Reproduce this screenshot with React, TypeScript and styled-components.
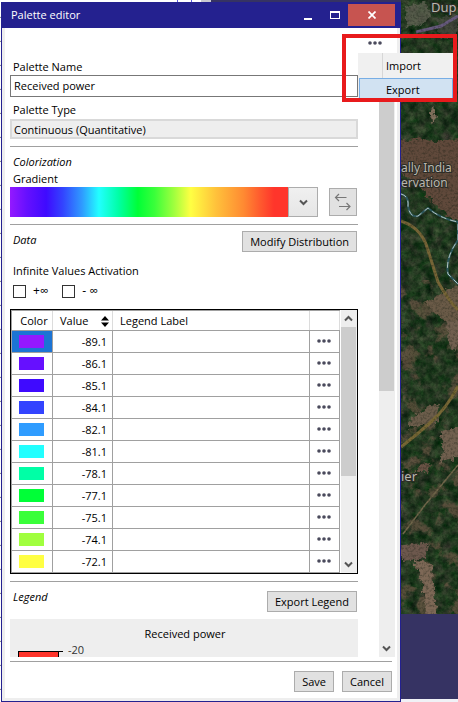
import React from "react";
import styled, { createGlobalStyle } from "styled-components";

const GlobalStyle = createGlobalStyle`
  *, *::before, *::after { box-sizing: border-box; }
  body { margin: 0; background: #f0f1f6; }
  body, button, input, table {
    font-family: "Open Sans", "Noto Sans", sans-serif;
    font-size: 11px;
    line-height: 16px;
    color: #000;
  }
  button, input { margin: 0; padding: 0; border-radius: 0; }
`;

const Desktop = styled.div`
  display: grid;
  grid-template-columns: 1px minmax(0, 1fr) 57px;
  min-height: 100vh;
  overflow: hidden;
`;

const LeftEdge = styled.div`
  background: repeating-linear-gradient(#fff 0 16px, #f2f2f2 16px 17px, #8c8c94 17px 18px, #fff 18px 24px);
`;

const DialogColumn = styled.div`
  padding-top: 2px;
  background: linear-gradient(
    90deg,
    #fff 0 176px, #5a5ae0 176px 177px, #fff 177px 190px, #5a5ae0 190px 191px,
    #fff 191px 200px, #c8c8d0 200px 210px, #363363 210px
  );
`;

const Window = styled.section`
  display: flex;
  flex-direction: column;
  min-height: 100%;
  border: 1px solid #24218f;
  border-top: 0;
  background: #eeeeee;
`;

const TitleBar = styled.header`
  display: flex;
  justify-content: space-between;
  height: 26px;
  padding: 2px 5px 2px 9px;
  background: #24218f;
`;

const Title = styled.h1`
  margin: 0;
  color: #fff;
  font-size: 11px;
  font-weight: 400;
  line-height: 22px;
`;

const WindowButtons = styled.div`
  display: flex;
`;

const WindowButton = styled.button<{ $close?: boolean }>`
  display: grid;
  place-items: center;
  width: ${(p) => (p.$close ? 47 : 27)}px;
  height: 22px;
  border: 0;
  background: ${(p) => (p.$close ? "#c75450" : "transparent")};
`;

const Surface = styled.main`
  display: flex;
  flex: 1;
  flex-direction: column;
  margin: 0 3px 3px;
  padding: 0 2px 0 5px;
  background: #fff;
`;

const ScrollRow = styled.div`
  display: flex;
  height: 629px;
`;

const Content = styled.div`
  display: flex;
  flex: 1;
  flex-direction: column;
  min-width: 0;
  padding-top: 31px;
`;

const Rail = styled.div`
  position: relative;
  display: flex;
  flex-direction: column;
  align-items: flex-end;
  width: 37px;
`;

const MoreButton = styled.button`
  display: grid;
  place-items: center;
  width: 27px;
  height: 30px;
  margin-right: 7px;
  border: 0;
  background: transparent;
`;

const FieldLabel = styled.label`
  padding-left: 3px;
`;

const NameInput = styled.input`
  height: 22px;
  margin: 0 0 5px;
  padding: 0 3px 2px;
  border: 1px solid #777;
  background: #fff;
`;

const TypeInput = styled.input`
  height: 20px;
  margin-top: 1px;
  padding: 0 2px;
  border: 2px solid #d9d9d9;
  background: #eee;
`;

const Divider = styled.hr`
  flex: none;
  width: 100%;
  height: 1px;
  margin: 7px 0 0;
  border: 0;
  background: #a0a0a0;
`;

const SectionTitle = styled.h2`
  margin: 0;
  padding: 0 3px;
  font-size: 11px;
  font-style: italic;
  font-weight: 400;
  line-height: 18px;
`;

const Stack = styled.div`
  display: flex;
  flex-direction: column;
  padding-top: 6px;
`;

const GradientRow = styled.div`
  display: flex;
  align-items: center;
  height: 30px;
`;

const GradientBar = styled.div`
  flex: 1;
  height: 30px;
  background: linear-gradient(
    90deg,
    #9419ff 0%, #6610ff 6%, #3f0aff 13%, #3344ff 19%, #2f9cff 26%, #22ffff 32%,
    #00ffa6 39%, #00ff37 46%, #3aff3a 52%, #a0ff3e 59%, #ffff43 65%,
    #ffc23b 74%, #ff8a32 84%, #ff5a2e 90%, #ff352b 95%, #ff352b 100%
  );
`;

const DropButton = styled.button`
  display: grid;
  place-items: center;
  width: 30px;
  height: 30px;
  border: 1px solid #acacac;
  background: linear-gradient(#f0f0f0, #e6e6e6);
`;

const SwapButton = styled.button`
  display: grid;
  place-items: center;
  width: 28px;
  height: 28px;
  margin: 0 1px 0 11px;
  border: 1px solid #acacac;
  background: #e1e1e1;
`;

const SectionBar = styled.div<{ $tall?: boolean }>`
  display: flex;
  align-items: flex-end;
  justify-content: space-between;
  padding: 6px 1px 0 0;

  & > h2 {
    padding-bottom: ${(p) => (p.$tall ? 6 : 3)}px;
  }
`;

const Button = styled.button`
  height: 21px;
  padding: 0 7px;
  border: 1px solid #acacac;
  background: #e1e1e1;
  line-height: 18px;
  white-space: nowrap;
`;

const GroupLabel = styled.div`
  margin-top: 11px;
  padding-left: 3px;
`;

const Checks = styled.div`
  display: flex;
  gap: 14px;
  margin-top: 4px;
  padding-left: 3px;
`;

const CheckLabel = styled.label`
  display: flex;
  align-items: center;
  gap: 7px;
  height: 16px;
  font-size: 12px;
`;

const Checkbox = styled.input`
  appearance: none;
  width: 13px;
  height: 13px;
  border: 1px solid #333;
  background: #fff;
`;

const TableFrame = styled.div`
  display: flex;
  height: 265px;
  margin-top: 10px;
  border: 1px solid #000;
`;

const Table = styled.table`
  flex: 1;
  width: 100%;
  min-width: 0;
  table-layout: fixed;
  border-spacing: 0;
  border: solid #a0a0a0;
  border-width: 1px 0 0 1px;
`;

const HeadCell = styled.th<{ $width?: number }>`
  width: ${(p) => (p.$width ? p.$width + "px" : "auto")};
  height: 20px;
  padding: 1px 4px 0 7px;
  border: solid #a0a0a0;
  border-width: 0 0 1px;
  box-shadow: inset -1px 0 #dcdcdc;
  font-weight: 400;
  text-align: left;

  &:first-child {
    padding: 1px 0 0 3px;
    text-align: center;
  }
`;

const SortHead = styled.div`
  display: flex;
  align-items: center;
  justify-content: space-between;
`;

const Cell = styled.td<{ $selected?: boolean }>`
  height: 22px;
  padding: 0 5px 0 7px;
  border: solid #a0a0a0;
  border-width: 0 1px 1px 0;
  background: ${(p) => (p.$selected ? "#1c74d4" : "#fff")};
  line-height: 21px;
  text-align: right;
`;

const ActionCell = styled(Cell)`
  padding: 0;
`;

const Swatch = styled.div`
  width: 25px;
  height: 13px;
`;

const RowButton = styled.button`
  display: grid;
  place-items: center;
  width: 28px;
  height: 18px;
  padding-bottom: 2px;
  border: 0;
  background: transparent;
`;

const Scrollbar = styled.div<{ $outer?: boolean }>`
  display: flex;
  flex: ${(p) => (p.$outer ? "1" : "none")};
  flex-direction: column;
  width: 16px;
  margin-left: 1px;
  background: #eee;
`;

const ScrollButton = styled.button`
  display: grid;
  flex: none;
  place-items: center;
  width: 15px;
  height: 17px;
  border: 0;
  background: transparent;
`;

const Thumb = styled.div<{ $length: number }>`
  flex: 0 0 ${(p) => p.$length}%;
  width: 15px;
  background: #cdcdcd;
`;

const Track = styled.div`
  display: flex;
  flex: 1;
  flex-direction: column;
`;

const LegendPanel = styled.div`
  flex: 1;
  min-height: 0;
  margin-top: 7px;
  padding-top: 7px;
  overflow: hidden;
  background: #eee;
`;

const LegendTitle = styled.div`
  padding-left: 2px;
  text-align: center;
`;

const LegendScale = styled.div`
  display: flex;
  align-items: flex-start;
  padding-left: 8px;
`;

const LegendBlock = styled.div`
  width: 41px;
  height: 20px;
  margin-top: 9px;
  border: 1px solid #000;
  background: #ff352b;
`;

const LegendTick = styled.div`
  width: 4px;
  height: 1px;
  margin: 9px 5px 0 0;
  background: #000;
`;

const LegendValue = styled.span`
  color: #333;
  line-height: 15px;
`;

const Footer = styled.footer`
  display: flex;
  justify-content: flex-end;
  gap: 8px;
  margin: 4px 3px 0 0;
  padding-top: 9px;
  border-top: 1px solid #a0a0a0;
`;

const Highlight = styled.div`
  position: absolute;
  top: 6px;
  right: -62px;
  z-index: 2;
  width: 115px;
  height: 68px;
  border: 4px solid #e81a1c;
  pointer-events: none;
`;

const Menu = styled.div`
  position: absolute;
  top: 25px;
  right: -58px;
  z-index: 1;
  display: flex;
  flex-direction: column;
  width: 95px;
  height: 47px;
  overflow: hidden;
  background: linear-gradient(90deg, #f0f0f0 24px, #d7d7d7 24px 25px, #f0f0f0 25px);
`;

const MenuItem = styled.button<{ $active?: boolean }>`
  flex: none;
  height: 25px;
  margin-left: 1px;
  padding: 0 0 ${(p) => (p.$active ? 2 : 0)}px 26px;
  border: 1px solid ${(p) => (p.$active ? "#78aee5" : "transparent")};
  background: ${(p) => (p.$active ? "#d1e2f2" : "transparent")};
  text-align: left;
`;

const MapColumn = styled.aside`
  display: flex;
  flex-direction: column;
  height: 699px;
  background: #363363;
`;

const MapDrawing = styled.svg`
  display: block;
  width: 57px;
  height: 614px;
`;

const MapText = styled.text<{ $town?: boolean }>`
  fill: #b9b7ae;
  stroke: #2c2c26;
  stroke-width: 2px;
  paint-order: stroke;
  font-family: "Noto Sans", sans-serif;
  font-size: ${(p) => (p.$town ? 13 : 12)}px;
`;

const Dots = () => (
  <svg width="16" height="6" viewBox="0 0 16 6" fill="#4a4a5c">
    <circle cx="3" cy="3" r="1.8" />
    <circle cx="8" cy="3" r="1.8" />
    <circle cx="13" cy="3" r="1.8" />
  </svg>
);

const Chevron = ({ up = false }: { up?: boolean }) => (
  <svg width="9" height="7" viewBox="0 0 9 7" fill="none" stroke="#555" strokeWidth="2">
    <path d={up ? "M1 5.5 4.5 2 8 5.5" : "M1 1.5 4.5 5 8 1.5"} />
  </svg>
);

const SwapIcon = () => (
  <svg width="18" height="18" viewBox="0 0 18 18" fill="none" stroke="#777" strokeWidth="1.2">
    <path d="M12.500 4.500H1.500M5 1 1.500 4.500 5 8M5 13.500h11M12.500 10l3.500 3.500-3.500 3.500" />
  </svg>
);

const SortIcon = () => (
  <svg width="8" height="11" viewBox="0 0 8 11">
    <path d="M0 4.500 4 0 8 4.500ZM0 6.500 4 11 8 6.500Z" />
  </svg>
);

const SatelliteMap = () => (
  <MapDrawing viewBox="0 0 57 614" role="img" aria-label="Satellite map">
    <defs>
      <filter id="forest" x="0" y="0" width="100%" height="100%" colorInterpolationFilters="sRGB">
        <feTurbulence type="fractalNoise" baseFrequency="0.12" numOctaves="5" seed="8" />
        <feColorMatrix values="0.35 0.05 0 0 -0.06  0.22 0.2 0 0 0.02  0.25 0.05 0 0 -0.02  0 0 0 0 1" />
      </filter>
      <filter id="fields" x="0" y="0" width="100%" height="100%" colorInterpolationFilters="sRGB">
        <feTurbulence type="fractalNoise" baseFrequency="0.06" numOctaves="5" seed="21" />
        <feColorMatrix values="0 0 0 0 0.4  0 0 0 0 0.33  0 0 0 0 0.26  8 0 0 0 -4.4" />
      </filter>
      <filter id="grain" x="0" y="0" width="100%" height="100%" colorInterpolationFilters="sRGB">
        <feTurbulence type="fractalNoise" baseFrequency="0.4" numOctaves="3" seed="2" />
        <feColorMatrix values="0 0 0 0 0.05  0 0 0 0 0.09  0 0 0 0 0.05  3 0 0 0 -1.3" />
      </filter>
      <filter id="rough" x="-10%" y="-10%" width="120%" height="120%">
        <feTurbulence type="fractalNoise" baseFrequency="0.2" numOctaves="3" seed="4" />
        <feDisplacementMap in="SourceGraphic" scale="9" xChannelSelector="R" yChannelSelector="G" />
      </filter>
    </defs>
    <rect width="57" height="614" fill="#1d3520" />
    <rect width="57" height="614" filter="url(#forest)" />
    <rect y="280" width="57" height="334" filter="url(#fields)" opacity="0.75" />
    <g filter="url(#rough)">
      <path d="M4 6 24 2 30 14 22 24 6 28Z" fill="#68675a" opacity="0.7" />
      <path d="M34 18 57 14V34L40 40Z" fill="#514d49" opacity="0.6" />
      <path d="M-6 142 20 138 34 142 66 138V224L44 214 28 198 18 184 6 178 -6 160Z" fill="#604a3a" />
      <path d="M44 290 66 284V330L46 322 32 312 24 304Z" fill="#6a5a46" />
      <path d="M32 108 35 118 31 122 28 112Z" fill="#806f5c" />
      <path d="M46 320 66 322 54 352 48 344Z" fill="#6f5f50" />
      <path d="M26 408 38 402 35 424 8 428 10 418Z" fill="#6c5d4b" />
      <path d="M40 432 66 424V452L38 464 42 450Z" fill="#71604f" />
      <path d="M20 464 30 462 26 472 14 472Z" fill="#6a5345" />
      <path d="M-6 546 28 542 24 558 4 562Z" fill="#6d594d" />
      <path d="M12 560 30 564 36 620H26L22 586Z" fill="#7d6757" />
    </g>
    <path d="M15 32 40 26 57 16" fill="none" stroke="#66597c" strokeWidth="3" />
    <path d="M0 221Q20 228 26 247T37 282Q44 294 50 302L57 310" fill="none" stroke="#776537" strokeWidth="3" />
    <path d="M57 386Q46 408 30 422T0 447" fill="none" stroke="#776735" strokeWidth="3" />
    <path d="M57 465 24 505 2 534" fill="none" stroke="#70664a" strokeWidth="1.5" />
    <rect width="57" height="614" filter="url(#grain)" opacity="0.3" />
    <path d="M0 194Q8 196 7 206 9 218 17 216L27 208Q38 218 57 222V240Q44 258 47 274L57 284" fill="none" stroke="#2c565b" strokeWidth="2" />
    <path d="M0 194Q8 196 7 206 9 218 17 216L27 208Q38 218 57 222V240Q44 258 47 274L57 284" fill="none" stroke="#b5c3be" strokeWidth="1" strokeDasharray="6 4" />
    <MapText $town x="30" y="12">Dup</MapText>
    <MapText x="0" y="172">ally India</MapText>
    <MapText x="0" y="187">ervation</MapText>
    <MapText $town x="0" y="481">ier</MapText>
  </MapDrawing>
);

const rows = [
  { color: "#9419ff", value: "-89.1" },
  { color: "#6610ff", value: "-86.1" },
  { color: "#3f0aff", value: "-85.1" },
  { color: "#3344ff", value: "-84.1" },
  { color: "#2f9cff", value: "-82.1" },
  { color: "#22ffff", value: "-81.1" },
  { color: "#00ffa6", value: "-78.1" },
  { color: "#00ff37", value: "-77.1" },
  { color: "#3aff3a", value: "-75.1" },
  { color: "#a0ff3e", value: "-74.1" },
  { color: "#ffff43", value: "-72.1" },
];

export default function App() {
  return (
    <>
      <GlobalStyle />
      <Desktop>
        <LeftEdge />
        <DialogColumn>
          <Window>
            <TitleBar>
              <Title>Palette editor</Title>
              <WindowButtons>
                <WindowButton aria-label="Minimize">
                  <svg width="8" height="12"><path d="M0 9h8v2H0z" fill="#fff" /></svg>
                </WindowButton>
                <WindowButton aria-label="Maximize">
                  <svg width="10" height="8"><path d="M0 0h10v8H0zM1 2v5h8V2z" fill="#fff" fillRule="evenodd" /></svg>
                </WindowButton>
                <WindowButton $close aria-label="Close">
                  <svg width="8" height="8"><path d="m.5.5 7 7m0-7-7 7" stroke="#fff" strokeWidth="1.700" /></svg>
                </WindowButton>
              </WindowButtons>
            </TitleBar>
            <Surface>
              <ScrollRow>
                <Content>
                  <FieldLabel htmlFor="name">Palette Name</FieldLabel>
                  <NameInput id="name" defaultValue="Received power" />
                  <FieldLabel htmlFor="type">Palette Type</FieldLabel>
                  <TypeInput id="type" readOnly value="Continuous (Quantitative)" />
                  <Divider />
                  <Stack>
                    <SectionTitle>Colorization</SectionTitle>
                    <FieldLabel as="div">Gradient</FieldLabel>
                    <GradientRow>
                      <GradientBar />
                      <DropButton aria-label="Choose gradient"><Chevron /></DropButton>
                      <SwapButton aria-label="Reverse gradient"><SwapIcon /></SwapButton>
                    </GradientRow>
                  </Stack>
                  <Divider />
                  <SectionBar>
                    <SectionTitle>Data</SectionTitle>
                    <Button>Modify Distribution</Button>
                  </SectionBar>
                  <GroupLabel>Infinite Values Activation</GroupLabel>
                  <Checks>
                    <CheckLabel><Checkbox type="checkbox" />+∞</CheckLabel>
                    <CheckLabel><Checkbox type="checkbox" />- ∞</CheckLabel>
                  </Checks>
                  <TableFrame>
                    <Table>
                      <thead>
                        <tr>
                          <HeadCell $width={41}>Color</HeadCell>
                          <HeadCell $width={60}><SortHead>Value<SortIcon /></SortHead></HeadCell>
                          <HeadCell>Legend Label</HeadCell>
                          <HeadCell $width={30} aria-label="Actions" />
                        </tr>
                      </thead>
                      <tbody>
                        {rows.map((row, i) => (
                          <tr key={row.value}>
                            <Cell $selected={i === 0}><Swatch style={{ background: row.color }} /></Cell>
                            <Cell>{row.value}</Cell>
                            <Cell />
                            <ActionCell><RowButton aria-label={`Options for ${row.value}`}><Dots /></RowButton></ActionCell>
                          </tr>
                        ))}
                      </tbody>
                    </Table>
                    <Scrollbar>
                      <ScrollButton aria-label="Scroll up"><Chevron up /></ScrollButton>
                      <Track><Thumb $length={65} /></Track>
                      <ScrollButton aria-label="Scroll down"><Chevron /></ScrollButton>
                    </Scrollbar>
                  </TableFrame>
                  <Divider />
                  <SectionBar $tall>
                    <SectionTitle>Legend</SectionTitle>
                    <Button>Export Legend</Button>
                  </SectionBar>
                  <LegendPanel>
                    <LegendTitle>Received power</LegendTitle>
                    <LegendScale>
                      <LegendBlock />
                      <LegendTick />
                      <LegendValue>-20</LegendValue>
                    </LegendScale>
                  </LegendPanel>
                </Content>
                <Rail>
                  <MoreButton aria-label="More options"><Dots /></MoreButton>
                  <Menu role="menu">
                    <MenuItem role="menuitem">Import</MenuItem>
                    <MenuItem role="menuitem" $active>Export</MenuItem>
                  </Menu>
                  <Highlight />
                  <Scrollbar $outer>
                    <ScrollButton aria-label="Scroll page up"><Chevron up /></ScrollButton>
                    <Track><Thumb $length={56} /></Track>
                    <ScrollButton aria-label="Scroll page down"><Chevron /></ScrollButton>
                  </Scrollbar>
                </Rail>
              </ScrollRow>
              <Footer>
                <Button>Save</Button>
                <Button>Cancel</Button>
              </Footer>
            </Surface>
          </Window>
        </DialogColumn>
        <MapColumn><SatelliteMap /></MapColumn>
      </Desktop>
    </>
  );
}
